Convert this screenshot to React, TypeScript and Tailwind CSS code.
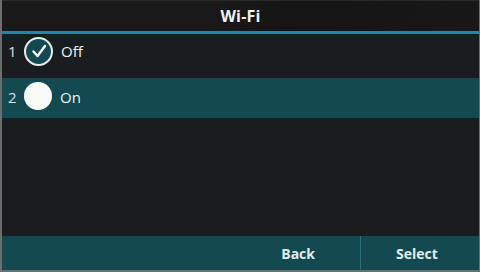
const items = [
  { n: 1, label: 'Off', checked: true },
  { n: 2, label: 'On', checked: false },
];

function Radio({ checked }: { checked: boolean }) {
  if (checked) return (
    <span className="w-[29px] h-[29px] rounded-full border-2 border-[#e6eeec] bg-[#134a52] flex items-center justify-center shrink-0">
      <svg width="18" height="18" viewBox="0 0 18 18" fill="none">
        <path d="M3.5 9.5l4 4.5 7.5-10" stroke="white" strokeWidth="2.4" strokeLinecap="round" strokeLinejoin="round" />
      </svg>
    </span>
  );
  return <span className="w-[28px] h-[28px] -mt-[2px] rounded-full bg-[#f7fbf8] shrink-0" />;
}

export default function App() {
  return (
    <div className="w-[480px] h-[272px] flex flex-col bg-[#1a1d20] border-l-2 border-r border-b-2 border-[#6e6e6e] font-['Open_Sans',sans-serif] text-[#eef2f0] overflow-hidden">
      <div className="h-[31px] shrink-0 flex items-center justify-center bg-[linear-gradient(115deg,#191919_0%,#191919_45%,#141414_60%,#181818_100%)] border-t border-[#2a2a2a]">
        <span className="text-[16px] font-bold tracking-[0.2px]">Wi-Fi</span>
      </div>
      <div className="h-[3px] shrink-0 bg-[#1b8ca0]" />
      <div className="flex-1 flex flex-col -mt-[2px]">
        {items.map(it => (
          <div
            key={it.n}
            className={`h-[40px] mb-[6px] flex items-center pl-[6px] gap-[7px] pb-[2px] ${it.checked ? '' : 'bg-[#134a52]'}`}
          >
            <span className="w-[9px] text-[15px] text-[#d8e2e0]">{it.n}</span>
            <Radio checked={it.checked} />
            <span className="ml-[1px] text-[15px]">{it.label}</span>
          </div>
        ))}
      </div>
      <div className="h-[34px] shrink-0 grid grid-cols-4 bg-[#134a52] text-[14px] font-bold text-[#e3ecea]">
        <div />
        <div />
        <div className="flex items-center justify-center pr-[4px]">Back</div>
        <div className="flex items-center justify-center border-l border-[#2d6f77] pr-[6px]">Select</div>
      </div>
    </div>
  );
}
